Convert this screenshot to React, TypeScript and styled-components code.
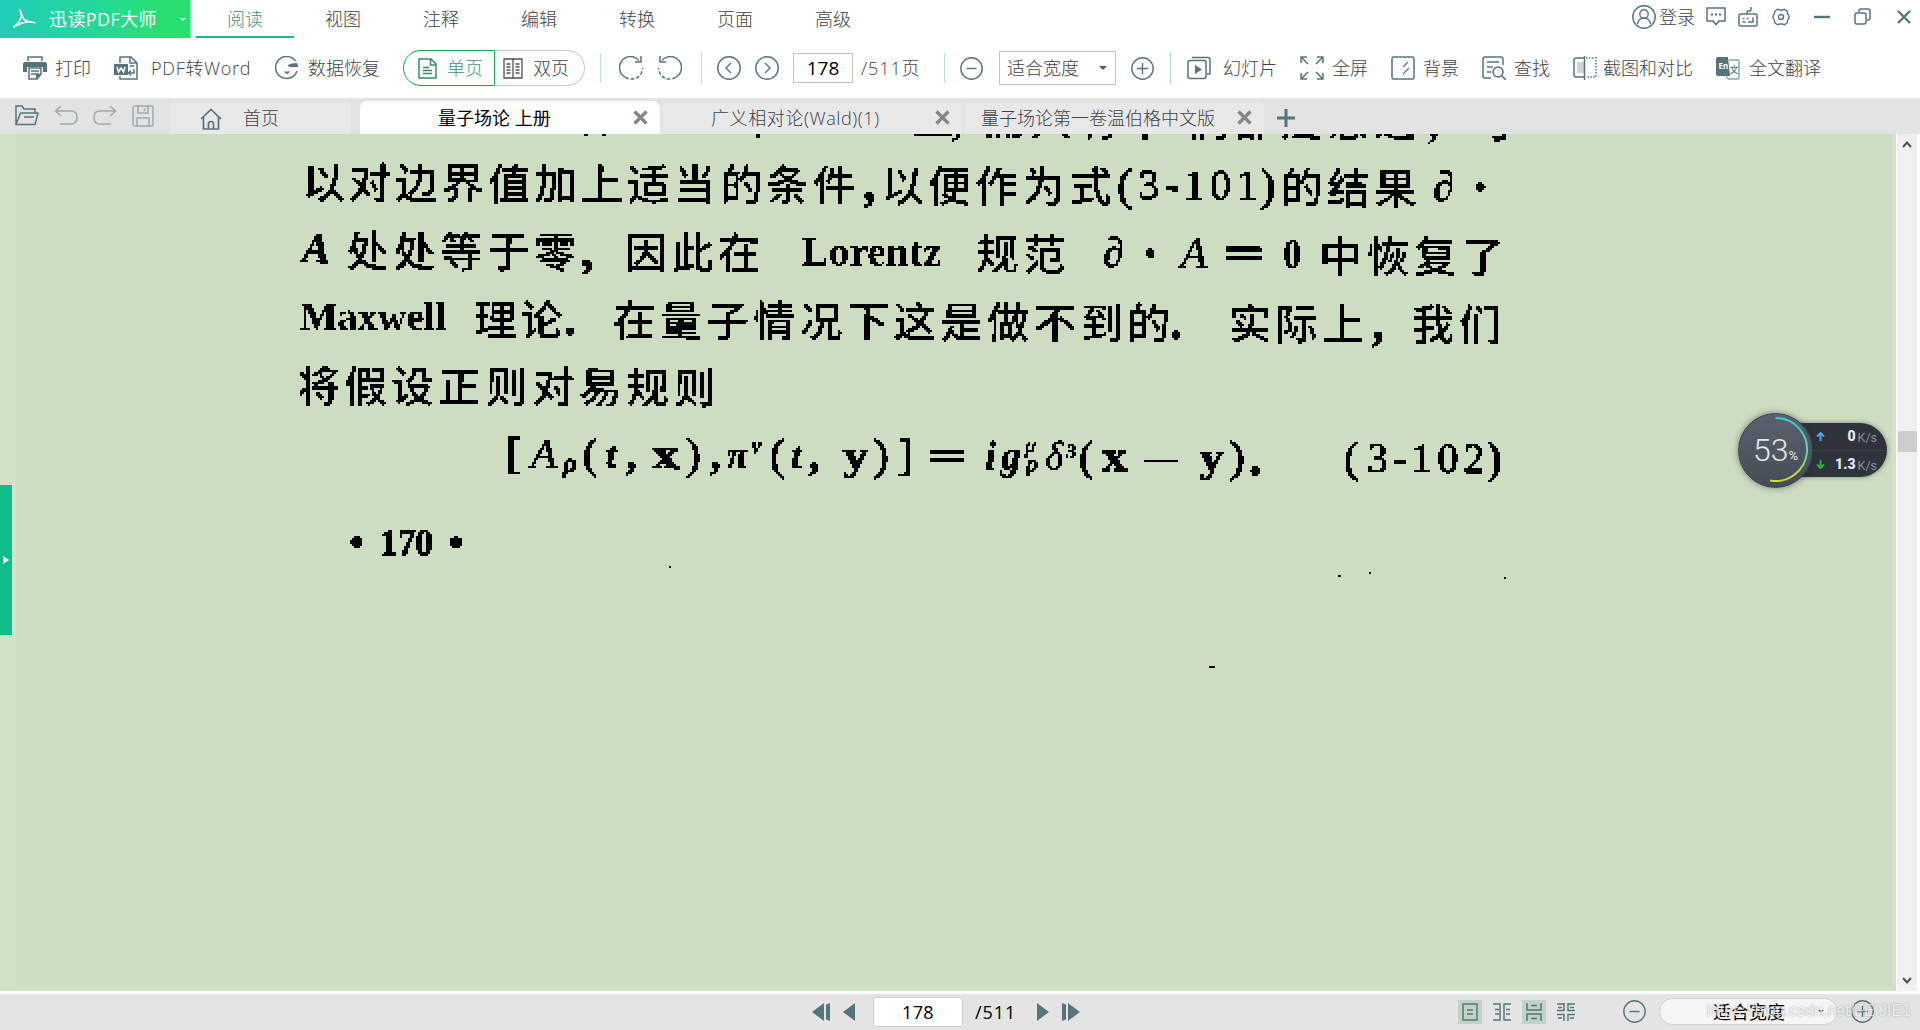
import React from 'react';
import styled, { createGlobalStyle } from 'styled-components';

const ink = '#56747a';
const uiFont = `"Open Sans", "Noto Sans CJK SC", sans-serif`;

const GlobalStyle = createGlobalStyle`
  * { box-sizing: border-box; }
  body { margin: 0; background: #fff; overflow: hidden; }
  svg { display: block; flex: none; }
`;

const Window = styled.div`
  display: flex;
  flex-direction: column;
  width: 1920px;
  height: 1030px;
  background: #fff;
  font: 300 18px/26px ${uiFont};
  color: #3f4246;
  white-space: nowrap;
  overflow: hidden;
`;

/* ---------- title bar ---------- */
const TitleBar = styled.header`
  display: flex;
  height: 38px;
  flex: none;
`;
const Brand = styled.div`
  display: flex;
  align-items: center;
  width: 191px;
  padding-left: 12px;
  margin-right: 5px;
  color: #fff;
  background: linear-gradient(90deg, #22ccb8 0%, #25d79a 50%, #28e06f 88%);
  border-right: 1px solid #8fe9b8;
`;
const BrandName = styled.span`
  width: 131px;
  margin-left: 13px;
  font-weight: 400;
  letter-spacing: 0.4px;
`;
const MenuTab = styled.div<{ $active?: boolean }>`
  width: 98px;
  height: 38px;
  line-height: 38px;
  text-align: center;
  color: ${p => (p.$active ? '#43917a' : '#3f4246')};
  border-bottom: 2px solid ${p => (p.$active ? '#11b98b' : 'transparent')};
`;
const WindowControls = styled.div`
  display: flex;
  align-items: center;
  height: 33px;
  margin-left: auto;
  padding-right: 9px;
`;
const Slot = styled.span<{ $ml?: number; $w?: number; $mt?: number; $ls?: number }>`
  display: block;
  flex: none;
  margin-left: ${p => p.$ml ?? 0}px;
  margin-top: ${p => p.$mt ?? 0}px;
  letter-spacing: ${p => p.$ls ?? 0}px;
  ${p => (p.$w ? `width: ${p.$w}px;` : '')}
`;

/* ---------- toolbar ---------- */
const Toolbar = styled.div`
  display: flex;
  align-items: center;
  height: 60px;
  flex: none;
  padding-left: 23px;
`;
const Tool = styled.div<{ $ml?: number; $gap?: number; $w?: number; $ls?: number }>`
  display: flex;
  align-items: center;
  flex: none;
  gap: ${p => p.$gap ?? 8}px;
  margin-left: ${p => p.$ml ?? 0}px;
  letter-spacing: ${p => p.$ls ?? 0}px;
  ${p => (p.$w ? `width: ${p.$w}px;` : '')}
`;
const Segments = styled.div`
  display: flex;
  flex: none;
  width: 182px;
  height: 36px;
  margin-left: 23px;
`;
const Segment = styled.div<{ $active?: boolean }>`
  display: flex;
  align-items: center;
  gap: 10px;
  width: ${p => (p.$active ? 92 : 90)}px;
  padding-left: ${p => (p.$active ? 14 : 8)}px;
  border: ${p => (p.$active ? '1.500px solid #12a551' : '1px solid #c8c8c8')};
  ${p => (p.$active ? '' : 'border-left: 0;')}
  border-radius: ${p => (p.$active ? '18px 0 0 18px' : '0 18px 18px 0')};
  color: ${p => (p.$active ? '#43917a' : '#3f4246')};
`;
const Divider = styled.i<{ $ml: number }>`
  flex: none;
  width: 1px;
  height: 30px;
  margin-left: ${p => p.$ml}px;
  background: #b5e2d3;
`;
const PageBox = styled.div`
  flex: none;
  width: 60px;
  height: 30px;
  margin-left: 14px;
  border: 1px solid #c3c3c3;
  color: #000;
  font-weight: 400;
  line-height: 28px;
  text-align: center;
  font-size: 19px;
`;
const ZoomSelect = styled.div`
  display: flex;
  align-items: center;
  justify-content: space-between;
  flex: none;
  width: 117px;
  height: 34px;
  margin-left: 16px;
  padding: 0 8px 0 7px;
  border: 1px solid #c3c3c3;
`;
const Caret = styled.i<{ $color: string; $size?: number; $ml?: number }>`
  display: block;
  margin-left: ${p => p.$ml ?? 0}px;
  border: ${p => p.$size ?? 4}px solid transparent;
  border-top: ${p => p.$size ?? 4}px solid ${p => p.$color};
  border-bottom: 0;
`;

/* ---------- document tabs ---------- */
const TabBar = styled.div`
  display: flex;
  align-items: flex-end;
  height: 36px;
  flex: none;
  padding-left: 15px;
  background: #e3e3e3;
`;
const QuickActions = styled.div`
  display: flex;
  align-items: center;
  gap: 15px;
  width: 156px;
  height: 36px;
  padding-bottom: 1px;
`;
const DocTab = styled.div<{ $w: number; $ml: number; $pl: number; $ls?: number; $active?: boolean }>`
  display: flex;
  align-items: center;
  width: ${p => p.$w}px;
  height: 33px;
  margin-left: ${p => p.$ml}px;
  padding-left: ${p => p.$pl}px;
  padding-right: 12px;
  border-radius: 7px 7px 0 0;
  background: ${p => (p.$active ? '#fff' : '#e8e8e8')};
  color: ${p => (p.$active ? '#000' : '#3f4246')};
  font-weight: ${p => (p.$active ? 400 : 300)};
  letter-spacing: ${p => p.$ls ?? 0}px;
  svg:last-child { margin-left: ${p => (p.$w === 300 ? 'auto' : '0')}; }
`;

/* ---------- viewer ---------- */
const Viewer = styled.main`
  display: flex;
  height: 857px;
  flex: none;
  background: #fff;
`;
const Desk = styled.div`
  position: relative;
  width: 1896px;
  padding: 0 4px 5px 16px;
  background: #d2e2c7;
  overflow: hidden;
`;
const Sheet = styled.article`
  height: 852px;
  background: #cdddc1;
  overflow: hidden;
`;
/* 1-bit scanned page: ink is sampled on a 2px grid and hard-thresholded */
const ScanLayer = styled.div`
  height: 852px;
  overflow: hidden;
  filter: url(#scan);
`;
const Scan = styled.div`
  margin-top: -55px;
  transform: rotate(0.29deg);
  transform-origin: 284px 88px;
  color: #000;
`;
const Line = styled.div<{ $h?: number; $mt?: number }>`
  display: flex;
  height: ${p => p.$h ?? 68.5}px;
  margin-top: ${p => p.$mt ?? 0}px;
  font: 500 42.5px/68px "Noto Sans CJK SC", sans-serif;
`;
type RunStyle = { $w: number; $ls?: number; $serif?: boolean; $it?: boolean; $b?: boolean; $size?: number; $dy?: number; $sx?: number; $stroke?: number };
const Run = styled.span<RunStyle>`
  flex: none;
  width: ${p => p.$w}px;
  letter-spacing: ${p => (p.$ls ?? 4.4) - 0.5}px;
  ${p => (p.$serif ? `font-family: "Liberation Serif", "DejaVu Serif", serif; font-weight: 400; letter-spacing: ${p.$ls ?? 0}px;` : '')}
  ${p => (p.$it ? 'font-style: italic;' : '')}
  ${p => (p.$b ? 'font-weight: 700;' : '')}
  ${p => (p.$size ? `font-size: ${p.$size}px;` : '')}
  ${p => (p.$stroke ? `-webkit-text-stroke: ${p.$stroke}px #000;` : '')}
  transform: translateY(${p => p.$dy ?? 0}px) scaleX(${p => p.$sx ?? 1});
  transform-origin: 0 50%;
`;
const Speck = styled.i<{ $x: number; $y: number; $w?: number }>`
  position: absolute;
  left: ${p => p.$x}px;
  top: ${p => p.$y}px;
  width: ${p => p.$w ?? 2}px;
  height: 2px;
  background: #000;
`;
const SideHandle = styled.div`
  position: absolute;
  left: 0;
  top: 351px;
  display: flex;
  align-items: center;
  justify-content: center;
  width: 12px;
  height: 150px;
  background: #10bd89;
`;
const ScrollBar = styled.div`
  display: flex;
  flex-direction: column;
  align-items: center;
  justify-content: space-between;
  width: 20px;
  margin-left: 1px;
  padding: 6px 0;
  background: #f0f0f0;
`;
const Thumb = styled.div`
  width: 19px;
  height: 21px;
  margin: 283px 0 auto;
  background: #cdcdcd;
`;

/* ---------- speed monitor ---------- */
const Monitor = styled.div`
  position: absolute;
  left: 1738px;
  top: 412px;
  display: flex;
  align-items: center;
  height: 76px;
  color: #e4e7e9;
  font-family: Roboto, sans-serif;
`;
const Dial = styled.div`
  position: relative;
  z-index: 1;
  display: flex;
  align-items: center;
  justify-content: center;
  width: 75px;
  height: 75px;
  border-radius: 50%;
  background: linear-gradient(#59626d, #464c56);
  border: 1.5px solid #3a4049;
  box-shadow: 0 0 6px rgba(40, 50, 50, 0.55);
  font-size: 32px;
  font-weight: 300;
  svg { position: absolute; inset: -1.5px; }
  small { font-size: 13px; font-weight: 400; padding-top: 11px; }
`;
const Speeds = styled.div`
  width: 106px;
  height: 54px;
  margin-left: -32px;
  border-radius: 0 27px 27px 0;
  background: #2e333c;
  box-shadow: 0 0 5px rgba(40, 50, 50, 0.5);
`;
const Speed = styled.div`
  display: flex;
  align-items: center;
  height: 27px;
  padding: 0 10px 0 35px;
  font: 700 14px/27px Roboto, sans-serif;
  & + & { border-top: 1px solid #3b4049; }
  b { margin-left: auto; }
  span { font-size: 12.5px; font-weight: 400; color: #8a8f96; padding-top: 2px; margin-left: 2px; }
`;

/* ---------- status bar ---------- */
const StatusBar = styled.footer`
  display: flex;
  align-items: center;
  position: relative;
  height: 36px;
  margin-top: 3px;
  flex: none;
  padding-left: 812px;
  padding-bottom: 1px;
  background: #e4e4e4;
  color: #000;
  font-weight: 400;
`;
const StatusPage = styled.div`
  width: 90px;
  height: 30px;
  margin-left: 18px;
  border: 1px solid #cfcfcf;
  border-radius: 3px;
  background: #fff;
  line-height: 28px;
  letter-spacing: 0.4px;
  text-align: center;
`;
const ViewMode = styled.div<{ $on?: boolean; $ml: number }>`
  display: flex;
  align-items: center;
  justify-content: center;
  width: 24px;
  height: 24px;
  margin-left: ${p => p.$ml}px;
  background: ${p => (p.$on ? '#c1d3c6' : 'transparent')};
`;
const FitPill = styled.div`
  display: flex;
  align-items: center;
  justify-content: space-between;
  width: 179px;
  height: 27px;
  margin-left: 13px;
  padding: 0 13px 0 53px;
  border: 1px solid #cfcfcf;
  border-radius: 14px;
  background: #f5f5f5;
`;
const Watermark = styled.span`
  position: absolute;
  right: 9px;
  top: 4px;
  font: 400 16px/26px "Liberation Sans", sans-serif;
  color: rgba(255, 255, 255, 0.72);
  text-shadow: 0 0 2px rgba(90, 90, 90, 0.5);
`;

/* ---------- icons ---------- */
type IconProps = { w?: number; h?: number; c?: string; s?: number; o?: number; children: React.ReactNode };
const Icon = ({ w = 24, h = 24, c = ink, s = 1.5, o = 1, children }: IconProps) => (
  <svg width={w} height={h} viewBox={`0 0 ${w} ${h}`} fill="none" stroke={c} strokeWidth={s} opacity={o}>
    {children}
  </svg>
);
const Logo = () => (
  <Icon w={24} h={20} c="#fff" s={1}>
    <path d="M7 0.500q1.500-.8 2.300 1.200L11.500 8q1.500 4 12 5v1.500q-7-1.500-13 .3-5 1.500-9 4.500L1 17.500q6-4 7.500-10Q8.500 4 7 .5zM10 8.500q-1 3-3.500 5.800 3-1.300 7-1.700Q11 11 10 8.500z" fill="#fff" fillRule="evenodd" stroke="none" />
  </Icon>
);
const Printer = () => (
  <Icon>
    <path d="M5 5V1h14v4" />
    <path d="M2 6h20q2 0 2 2v8h-4v-5H4v5H0V8q0-2 2-2z" fill={ink} stroke="none" />
    <path d="M6 12h12v6l-4 5H6z" />
    <path d="M8 15h8M8 18h8" />
    <path d="M13 23v-5h6z" fill={ink} stroke="none" />
  </Icon>
);
const WordIcon = () => (
  <Icon>
    <path d="M6 7V1h11l6 6v16H6v-3" />
    <path d="M16 1v6h7" />
    <path d="M0 8h14v11H0z" fill={ink} stroke="none" />
    <path d="M3 11l1.500 5 2.500-4 2.500 4L11 11" stroke="#fff" />
    <path d="M16 10h4M20 13v4h-5m2-2.500L14.500 17l2.500 2.500" />
  </Icon>
);
const Recover = () => (
  <Icon>
    <path d="M20.500 5A11 11 0 1 0 22 15" />
    <path d="M13 9q3-2 9-2l1.500 4H15q-2 0-2-2z" fill={ink} stroke="none" />
    <path d="M9 15q2 1 6 0-1 3-3 3t-3-3z" fill={ink} stroke="none" />
  </Icon>
);
const SinglePage = () => (
  <Icon w={19} h={21} c="#3b8b62">
    <path d="M1 1h12l5 5v14H1zM12.500 1v6H18M5 9.500h6M5 12.500h9M5 15.500h9" />
  </Icon>
);
const DoublePage = () => (
  <Icon w={20} h={21} c="#4d5357" s={1.3}>
    <path d="M1 1h18v19H1zM10 1v19M3.500 6h4M3.500 9h4M3.500 12h4M3.500 15h4M12.500 6h4M12.500 9h4M12.500 12h4M12.500 15h4" />
  </Icon>
);
const Rotate = ({ flip }: { flip?: boolean }) => (
  <Icon w={25}>
    <g transform={flip ? 'translate(25 0) scale(-1 1)' : undefined}>
      <path d="M20 4.500A11 11 0 1 0 6.500 21.300" />
      <path d="M6.500 21.300A11 11 0 0 0 23.500 12" strokeDasharray="3.500 2" />
      <path d="M22 0v6h-6" />
    </g>
  </Icon>
);
const CircleIcon = ({ d, size = 24 }: { d: string; size?: number }) => (
  <Icon w={size} h={size} s={1.4}>
    <circle cx={size / 2} cy={size / 2} r={size / 2 - 0.8} />
    <path d={d} />
  </Icon>
);
const Slides = () => (
  <Icon>
    <rect x="1" y="4.500" width="18" height="18" rx="2" />
    <path d="M5 1.500h16q2 0 2 2V18h-3" />
    <path d="M8 9l7 4.500L8 18z" fill={ink} stroke="none" />
  </Icon>
);
const FullScreen = () => (
  <Icon>
    <path d="M1 7V1h6M1 1l7 7M17 1h6v6M23 1l-7 7M1 17v6h6M1 23l7-7M23 17v6h-6M23 23l-7-7" />
  </Icon>
);
const Background = () => (
  <Icon>
    <rect x="1" y="1" width="22" height="22" rx="1.500" />
    <path d="M12 11l5-5M12 18l6-6" strokeWidth="1.200" />
  </Icon>
);
const Find = () => (
  <Icon>
    <path d="M9 22H3q-2 0-2-2V3q0-2 2-2h16q2 0 2 2v6M5 6h12M5 11h6M5 16h4" />
    <circle cx="16" cy="16" r="5" />
    <path d="M19.500 19.500L24 24" />
  </Icon>
);
const Compare = () => (
  <Icon>
    <path d="M11 2H3Q1 2 1 4v15q0 2 2 2h8" />
    <path d="M4 6h7v11H4z" fill="#cdd5d7" stroke="none" />
    <path d="M11.500 0v24" />
    <path d="M13 2h10v19H13" strokeDasharray="1.500 1.500" />
  </Icon>
);
const IconLetters = styled.text`
  font: 700 8px "Open Sans", sans-serif;
  letter-spacing: 0;
`;
const IconHan = styled.text`
  font: 500 9px "Noto Sans CJK SC", sans-serif;
`;
const Translate = () => (
  <Icon>
    <path d="M2 1h10l2 19H2Q0 20 0 18V3q0-2 2-2z" fill={ink} stroke="none" />
    <path d="M13 4h9q1 0 1 1v17q0 1-1 1H12l-2-3" strokeWidth="1" />
    <IconLetters x="2.500" y="13" fill="#fff" stroke="none">En</IconLetters>
    <IconHan x="13.500" y="17" fill={ink} stroke="none">文</IconHan>
  </Icon>
);
const Close = () => (
  <Icon w={15} h={15} c="#80868c" s={3.2}>
    <path d="M1.500 1.500l12 12M13.500 1.500l-12 12" />
  </Icon>
);

type RunData = Omit<RunStyle, '$w'> & { x: number; t: string };
const Runs = ({ items, ...rest }: { items: RunData[]; $h?: number; $mt?: number }) => (
  <Line {...rest}>
    <Run $w={items[0].x - 16} />
    {items.map(({ x, t, ...style }, i) => (
      <Run key={i} {...style} $w={(items[i + 1]?.x ?? 1520) - x}>{t}</Run>
    ))}
  </Line>
);
const S = { $serif: true, $size: 42, $stroke: 0.8 };
const B = { $serif: true, $size: 42, $b: true };
const P = { $serif: true, $size: 43, $stroke: 1.3 };
const I = { $serif: true, $size: 42, $it: true, $stroke: 0.5 };
const M = { ...B, $stroke: 1 };

const lines: RunData[][] = [
  [
    { x: 576, t: '件' }, { x: 736, t: '个' }, { x: 911, t: '上' },
    { x: 950, t: ',', ...B, $size: 50 }, { x: 982, t: '而只有不', $ls: 5 }, { x: 1185, t: '们都注意过', $ls: 5 },
    { x: 1426, t: ',', ...B, $size: 50 }, { x: 1470, t: '可' },
  ],
  [
    { x: 302, t: '以对边界值加上适当的条件' }, { x: 863, t: ',', ...M, $size: 50 },
    { x: 881, t: '以便作为式', $ls: 5 }, { x: 1117, t: '(', ...P, $size: 45 },
    { x: 1138, t: '3-101', ...S, $ls: 5.2, $size: 42 }, { x: 1260, t: ')', ...P, $size: 45 },
    { x: 1280, t: '的结果', $ls: 5 }, { x: 1433, t: '∂', ...M }, { x: 1472, t: '·', ...M, $size: 50 },
  ],
  [
    { x: 302, t: 'A', ...I, $b: true }, { x: 346, t: '处处等于零', $ls: 5 }, { x: 581, t: ',', ...M, $size: 50 },
    { x: 625, t: '因此在', $ls: 4.5 }, { x: 801, t: 'Lorentz', ...B, $ls: 0.4, $size: 41 }, { x: 976, t: '规范', $ls: 5 },
    { x: 1103, t: '∂', ...M }, { x: 1142, t: '·', ...M, $size: 50 }, { x: 1181, t: 'A', ...I },
    { x: 1223, t: '=', ...B, $sx: 1.7, $stroke: 1.6 }, { x: 1283, t: '0', ...B, $size: 41, $sx: 0.9 }, { x: 1319, t: '中恢复了', $ls: 5.5 },
  ],
  [
    { x: 300, t: 'Maxwell', ...B, $size: 40 }, { x: 474, t: '理论', $ls: 4 }, { x: 564, t: '.', ...M, $size: 50 },
    { x: 613, t: '在量子情况下这是做不到的', $ls: 4.8 }, { x: 1170, t: '.', ...M, $size: 50 },
    { x: 1229, t: '实际上', $ls: 4.5 }, { x: 1372, t: ',', ...M, $size: 50 }, { x: 1412, t: '我们', $ls: 5.6 },
  ],
  [{ x: 298, t: '将假设正则对易规则', $ls: 5 }],
];
const equation: RunData[] = [
  { x: 507, t: '[', ...P }, { x: 532, t: 'A', ...I }, { x: 564, t: 'ρ', ...I, $b: true, $size: 27, $dy: 9 }, { x: 584, t: '(', ...P },
  { x: 607, t: 't', ...I, $b: true, $size: 38 }, { x: 627, t: ',', ...M }, { x: 653, t: 'x', ...M, $sx: 1.3 }, { x: 687, t: ')', ...P },
  { x: 711, t: ',', ...M }, { x: 728, t: 'π', ...I, $b: true, $size: 38 }, { x: 752, t: 'ν', ...I, $b: true, $size: 24, $dy: -10 }, { x: 771, t: '(', ...P },
  { x: 792, t: 't', ...I, $b: true, $size: 38 }, { x: 810, t: ',', ...M }, { x: 844, t: 'y', ...M, $sx: 1.2 }, { x: 875, t: ')', ...P },
  { x: 899, t: ']', ...P }, { x: 929, t: '=', ...B, $sx: 1.6, $stroke: 1.6 }, { x: 986, t: 'i', ...I, $b: true, $size: 40 }, { x: 1002, t: 'g', ...I, $b: true, $size: 40 },
  { x: 1026, t: 'μ', ...I, $size: 22, $dy: -11 }, { x: 1027, t: 'ρ', ...I, $b: true, $size: 24, $dy: 7 }, { x: 1046, t: 'δ', ...I, $size: 40 },
  { x: 1066, t: '³', ...I, $size: 34 }, { x: 1080, t: '(', ...P }, { x: 1103, t: 'x', ...M, $sx: 1.2 }, { x: 1145, t: '–', ...B, $sx: 1.6 },
  { x: 1201, t: 'y', ...M, $sx: 1.1 }, { x: 1231, t: ')', ...P }, { x: 1250, t: '.', ...M, $size: 50 },
  { x: 1345, t: '(', ...P }, { x: 1368, t: '3-102', ...S, $ls: 4.8 }, { x: 1488, t: ')', ...B, $size: 46 },
];
const folio: RunData[] = [
  { x: 351, t: '•', ...M }, { x: 382, t: '170', ...M, $size: 38, $sx: 0.92 }, { x: 450, t: '•', ...M },
];

const menu = ['阅读', '视图', '注释', '编辑', '转换', '页面', '高级'];

export default function App() {
  return (
    <Window>
      <GlobalStyle />
      <TitleBar>
        <Brand>
          <Logo />
          <BrandName>迅读PDF大师</BrandName>
          <Caret $color="#fff" $size={3.5} />
        </Brand>
        {menu.map((m, i) => <MenuTab key={m} $active={i === 0}>{m}</MenuTab>)}
        <WindowControls>
          <Icon s={1.4}><circle cx="12" cy="12" r="11.200" /><circle cx="12" cy="9" r="4.200" /><path d="M5.500 19q1-6 6.500-6t6.500 6" /></Icon>
          <Slot $ml={3} $w={36}>登录</Slot>
          <Slot $ml={11}><Icon w={20} h={19}><path d="M1 1h18v13h-6l-3 3.500L7 14H1z" /><path d="M5 7.500h2M9 7.500h2M13 7.500h2" strokeWidth="2" /></Icon></Slot>
          <Slot $ml={12}><Icon w={20} h={20}><rect x="1" y="7" width="18" height="12" rx="1.500" /><path d="M9 7V5q0-1 1-1h2q1 0 1-1V0M4.500 11.500h2M8.500 11.500h2M15 10.500v4.500H10M4.500 15h3" /></Icon></Slot>
          <Slot $ml={14}><Icon w={18} h={18} s={1.4}><path d="M5.500 1.200l2 .8h3l2-.8 2.800 2 .2 2.300L17 8v2l-1.500 2.500-.2 2.300-2.800 2-2-.8h-3l-2 .8-2.800-2-.2-2.300L1 10V8l1.500-2.500.2-2.300z" strokeLinejoin="round" /><circle cx="9" cy="9" r="2.500" /></Icon></Slot>
          <Slot $ml={24}><Icon w={16} h={4} s={2.4}><path d="M0 2h16" /></Icon></Slot>
          <Slot $ml={24}><Icon w={17} h={17}><rect x="1" y="5" width="11" height="11" rx="2" /><path d="M5 4V3q0-2 2-2h7q2 0 2 2v7q0 2-2 2h-1" /></Icon></Slot>
          <Slot $ml={26}><Icon w={14} h={14} s={2.4}><path d="M1 1l12 12M13 1L1 13" /></Icon></Slot>
        </WindowControls>
      </TitleBar>

      <Toolbar>
        <Tool><Printer />打印</Tool>
        <Tool $ml={23} $gap={13} $w={138} $ls={0.7}><WordIcon />PDF转Word</Tool>
        <Tool $ml={23} $gap={9}><Recover />数据恢复</Tool>
        <Segments>
          <Segment $active><SinglePage />单页</Segment>
          <Segment><DoublePage />双页</Segment>
        </Segments>
        <Divider $ml={15} />
        <Slot $ml={18}><Rotate /></Slot>
        <Slot $ml={13}><Rotate flip /></Slot>
        <Divider $ml={19} />
        <Slot $ml={15}><CircleIcon d="M14 7l-5 5 5 5" /></Slot>
        <Slot $ml={14}><CircleIcon d="M10 7l5 5-5 5" /></Slot>
        <PageBox>178</PageBox>
        <Slot $ml={8} $w={83} $ls={0.9}>/511页</Slot>
        <Divider $ml={0} />
        <Slot $ml={15}><CircleIcon size={23} d="M6.500 11.500h10" /></Slot>
        <ZoomSelect>适合宽度<Caret $color="#4d5f66" /></ZoomSelect>
        <Slot $ml={15}><CircleIcon size={23} d="M6 11.500h11M11.500 6v11" /></Slot>
        <Divider $ml={16} />
        <Tool $ml={16} $gap={12}><Slides />幻灯片</Tool>
        <Tool $ml={23}><FullScreen />全屏</Tool>
        <Tool $ml={23}><Background />背景</Tool>
        <Tool $ml={23}><Find />查找</Tool>
        <Tool $ml={23} $gap={6}><Compare />截图和对比</Tool>
        <Tool $ml={23} $gap={9}><Translate />全文翻译</Tool>
      </Toolbar>

      <TabBar>
        <QuickActions>
          <Icon w={24} h={21}><path d="M4 19.500H1V1h6l2 3h11v4M1 19.500L5.500 8H23l-3 11.500zM9 12h10" /></Icon>
          <Icon w={24} h={21} o={0.5}><path d="M7 1L1.500 6 7 11M2 6h15q6 0 6 6.500T17 19H6" /></Icon>
          <Icon w={24} h={21} o={0.5}><path d="M17 1l5.500 5L17 11M22 6H7q-6 0-6 6.500T7 19h11" /></Icon>
          <Icon w={22} h={22} o={0.5}><path d="M1 3q0-2 2-2h16q2 0 2 2v16q0 2-2 2H3q-2 0-2-2zM6 1v7h10V1M5 21v-8h12v8M12.500 3v3" /></Icon>
        </QuickActions>
        <DocTab $w={180} $ml={0} $pl={29}>
          <Slot $mt={3}><Icon w={22} h={22} s={1.7}><path d="M1 11L11 1.500 21 11M3.500 9v12h15V9M8.500 21v-5q0-2.500 2.500-2.500t2.500 2.500v5" /></Icon></Slot>
          <Slot $ml={21}>首页</Slot>
        </DocTab>
        <DocTab $w={300} $ml={9} $pl={78} $active>量子场论 上册<Close /></DocTab>
        <DocTab $w={300} $ml={2} $pl={49} $ls={0.6}>广义相对论(Wald)(1)<Close /></DocTab>
        <DocTab $w={300} $ml={2} $pl={17}>量子场论第一卷温伯格中文版<Close /></DocTab>
        <Slot $ml={13}><Icon w={18} h={25} s={3}><path d="M0 9h18M9 0v18" /></Icon></Slot>
      </TabBar>

      <Viewer>
        <Desk>
          <Sheet>
            <svg width="0" height="0" style={{ position: 'absolute' }}>
              <filter id="scan" x="0" y="0" width="100%" height="100%">
                <feFlood x="0" y="0" width="1" height="1" floodColor="#000" result="dot" />
                <feComposite in="dot" in2="dot" operator="over" x="0" y="0" width="2" height="2" result="cell" />
                <feTile in="cell" result="grid" />
                <feComposite in="SourceGraphic" in2="grid" operator="in" result="p0" />
                <feOffset in="p0" dx="1" dy="0" result="p1" />
                <feOffset in="p0" dx="0" dy="1" result="p2" />
                <feOffset in="p0" dx="1" dy="1" result="p3" />
                <feMerge>
                  <feMergeNode in="p0" />
                  <feMergeNode in="p1" />
                  <feMergeNode in="p2" />
                  <feMergeNode in="p3" />
                </feMerge>
                <feComponentTransfer><feFuncA type="discrete" tableValues="0 0 1 1 1" /></feComponentTransfer>
              </filter>
            </svg>
            <ScanLayer>
              <Scan>
                {lines.map((l, i) => <Runs key={i} items={l} $h={i === 0 ? 67 : i === 3 ? 67 : 68} />)}
                <Runs items={equation} $mt={1} />
                <Runs items={folio} $mt={20} />
              </Scan>
            </ScanLayer>
          </Sheet>
          <Speck $x={669} $y={432} />
          <Speck $x={1338} $y={441} $w={3} />
          <Speck $x={1369} $y={438} />
          <Speck $x={1504} $y={443} />
          <Speck $x={1209} $y={532} $w={6} />
          <SideHandle><Icon w={6} h={8} s={0}><path d="M0 0l6 4-6 4z" fill="#fff" /></Icon></SideHandle>
        </Desk>
        <ScrollBar>
          <Icon w={10} h={8} c="#505050" s={2}><path d="M1 7l4-4.500L9 7" /></Icon>
          <Thumb />
          <Icon w={10} h={8} c="#505050" s={2}><path d="M1 1l4 4.500L9 1" /></Icon>
        </ScrollBar>
      </Viewer>

      <StatusBar>
        <Icon w={19} h={18} s={0}><path d="M12 0v18L0 9zM14 1.500L18 0v18l-4-1.500z" fill={ink} /></Icon>
        <Slot $ml={12}><Icon w={12} h={18} s={0}><path d="M12 0v18L0 9z" fill={ink} /></Icon></Slot>
        <StatusPage>178</StatusPage>
        <Slot $ml={12} $w={62} $ls={0.9}>/511</Slot>
        <Icon w={12} h={18} s={0}><path d="M0 0v18l12-9z" fill={ink} /></Icon>
        <Slot $ml={13}><Icon w={19} h={18} s={0}><path d="M0 0l4 1.500v15L0 18zM6 0v18l12-9z" fill={ink} /></Icon></Slot>
        <ViewMode $ml={377} $on><Icon w={16} h={18}><path d="M1 1h14v16H1zM5 7h6M5 11h6" /></Icon></ViewMode>
        <ViewMode $ml={8}><Icon w={18} h={18}><path d="M0 1h7v16H0M18 1h-7v16h7M2 6.500h4M2 11h4M13 6.500h4M13 11h4" /></Icon></ViewMode>
        <ViewMode $ml={8} $on><Icon w={16} h={18}><path d="M1 0v7h14V0M1 18v-7h14v7M5 2.500h6M5 15.500h6" /></Icon></ViewMode>
        <ViewMode $ml={8}><Icon w={18} h={18}><path d="M0 7.500h7V0M18 7.500h-7V0M0 11.500h7V18M18 11.500h-7V18M0 1h7M11 1h7M1 4.500h4M13 4.500h4M1 15h4M13 15h4" /></Icon></ViewMode>
        <Slot $ml={45}><CircleIcon size={23} d="M6.500 11.500h10" /></Slot>
        <FitPill>适合宽度<Caret $color={ink} $size={3} /></FitPill>
        <Slot $ml={13}><CircleIcon size={23} d="M6 11.500h11M11.500 6v11" /></Slot>
        <Watermark>https://blog.csdn.net/FEIJIE1</Watermark>
      </StatusBar>

      <Monitor>
        <Dial>
          <svg width="75" height="75" viewBox="0 0 75 75" fill="none">
            <defs><linearGradient id="arc" x1="0" y1="0" x2="0" y2="1"><stop offset="0" stopColor="#3cc8d0" /><stop offset="0.550" stopColor="#5fdca0" /><stop offset="1" stopColor="#d8d83c" /></linearGradient></defs>
            <path d="M37.500 6A31.500 31.500 0 1 1 32 68.500" stroke="url(#arc)" strokeWidth="2" />
          </svg>
          53<small>%</small>
        </Dial>
        <Speeds>
          <Speed><Icon w={9} h={9} c="#42aef0" s={2}><path d="M4.500 9V1M1 4.500L4.500 1 8 4.500" /></Icon><b>0</b><span>K/s</span></Speed>
          <Speed><Icon w={9} h={9} c="#2fae3c" s={2}><path d="M4.500 0v8M1 4.500L4.500 8 8 4.500" /></Icon><b>1.3</b><span>K/s</span></Speed>
        </Speeds>
      </Monitor>
    </Window>
  );
}
